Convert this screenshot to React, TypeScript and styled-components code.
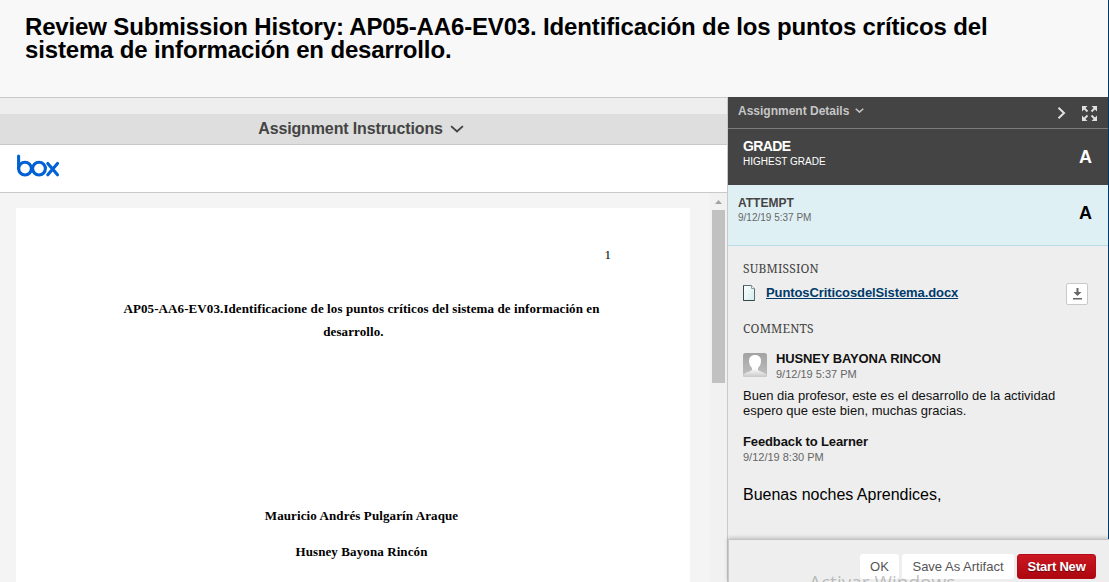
import React from "react";
import styled, { createGlobalStyle } from "styled-components";

const Global = createGlobalStyle`
  * { box-sizing: border-box; }
  html, body { margin: 0; padding: 0; overflow: hidden; }
  body { font-family: "Liberation Sans", Arial, sans-serif; background: #f8f8f8; color: #000; }
  h1, h2, h3, p { margin: 0; }
`;

const Page = styled.div`
  position: relative;
  width: 1109px;
  height: 582px;
  display: flex;
  background: #003a6b;
  flex-direction: column;
  overflow: hidden;
`;
const Top = styled.header`
  height: 97px;
  flex: none;
  margin-right: 1px;
  padding: 15px 25px 0;
  background: #f8f8f8;
`;
const Title = styled.h1`
  font-size: 24px;
  line-height: 23px;
  font-weight: bold;
  letter-spacing: -0.155px;
  white-space: nowrap;
`;
const Main = styled.main`
  display: flex;
  height: 485px;
`;
const Viewer = styled.section`
  width: 728px;
  flex: none;
  border-top: 1px solid #c9c9c9;
  border-right: 1px solid #c9c9c9;
  padding-top: 16px;
  background: #eee;
`;
const Instructions = styled.div`
  height: 31px;
  display: flex;
  align-items: center;
  justify-content: center;
  gap: 7px;
  padding-right: 5px;
  background: #dedede;
  border-bottom: 1px solid #c9c9c9;
  font-size: 16px;
  font-weight: bold;
  letter-spacing: -0.13px;
  color: #444;
`;
const BoxBar = styled.div`
  height: 48px;
  padding: 9px 0 0 16px;
  background: #fff;
  border-bottom: 1px solid #c9c9c9;
  svg { display: block; }
`;
const DocArea = styled.div`
  display: flex;
  height: 389px;
  background: #f4f4f4;
`;
const Paper = styled.article`
  width: 674px;
  margin: 15px 20px 0 16px;
  flex: none;
  background: #fff;
  font-family: "Liberation Serif", "Times New Roman", serif;
  font-weight: bold;
  font-size: 13px;
  letter-spacing: 0.1px;
  text-align: center;
  padding-top: 39px;
`;
const PageNumber = styled.p`
  text-align: right;
  padding-right: 79px;
  font-weight: normal;
  font-size: 13px;
  line-height: 16px;
  margin-bottom: 34px;
`;
const DocLine = styled.p<{ $gap?: number; $indent?: number }>`
  line-height: 23px;
  margin-bottom: ${(p) => p.$gap ?? 0}px;
  padding-left: ${(p) => p.$indent ?? 0}px;
  white-space: nowrap;
`;
const ScrollTrack = styled.div`
  width: 17px;
  padding: 7px 2px 0;
  background: #f1f1f1;
  svg { display: block; margin: 0 0 6px 3px; }
`;
const Thumb = styled.div`
  width: 13px;
  height: 173px;
  background: #c1c1c1;
`;
const Side = styled.aside`
  width: 380px;
  background: #eee;
`;
const Details = styled.div`
  height: 32px;
  display: flex;
  align-items: center;
  padding: 0 10px;
  background: #444;
  border-bottom: 1px solid #7c7c7c;
  color: #c6c6c6;
`;
const DetailsLabel = styled.span`
  flex: 1;
  display: flex;
  align-items: center;
  gap: 6px;
  padding-bottom: 4px;
  font-size: 12px;
  font-weight: bold;
`;
const Tools = styled.span`
  display: flex;
  gap: 15px;
  align-items: center;
  padding-top: 1px;
`;
const ScoreRow = styled.div<{ $dark?: boolean }>`
  height: ${(p) => (p.$dark ? 56 : 61)}px;
  display: flex;
  justify-content: space-between;
  padding: ${(p) => (p.$dark ? "9px 16px 0 15px" : "9px 16px 0 10px")};
  background: ${(p) => (p.$dark ? "#444" : "#dff0f5")};
  color: ${(p) => (p.$dark ? "#fff" : "#444")};
  border-bottom: ${(p) => (p.$dark ? "none" : "1px solid #b8dbe5")};
`;
const ScoreName = styled.h2<{ $tight?: boolean }>`
  font-size: ${(p) => (p.$tight ? 14 : 12)}px;
  letter-spacing: ${(p) => (p.$tight ? "-0.6px" : "0")};
  line-height: ${(p) => (p.$tight ? 17 : 18)}px;
  margin-bottom: ${(p) => (p.$tight ? 1 : 0)}px;
`;
const ScoreNote = styled.p<{ $dim?: boolean }>`
  font-size: 10px;
  line-height: 12px;
  color: ${(p) => (p.$dim ? "#666" : "#fff")};
`;
const Letter = styled.strong<{ $black?: boolean }>`
  font-size: 18px;
  line-height: 20px;
  padding-top: 9px;
  color: ${(p) => (p.$black ? "#000" : "#fff")};
`;
const Content = styled.div`
  padding: 15px 20px 0 15px;
  height: 293px;
`;
const Heading = styled.h3`
  font-family: "Noto Serif", "Liberation Serif", Georgia, serif;
  font-weight: normal;
  font-size: 12px;
  letter-spacing: 0.18px;
  line-height: 16px;
  color: #444;
`;
const FileRow = styled.div`
  display: flex;
  height: 22px;
  margin: 6px 0 16px;
  align-items: center;
  & > svg { margin-top: -2px; }
`;
const FileLink = styled.a`
  flex: 1;
  margin: -3px 0 0 10px;
  color: #003a6b;
  font-size: 13px;
  font-weight: bold;
  letter-spacing: -0.1px;
  text-decoration: underline;
`;
const Download = styled.button`
  width: 22px;
  height: 22px;
  padding: 0;
  display: grid;
  place-items: center;
  background: #fff;
  border: 1px solid #c9c9c9;
  border-radius: 2px;
`;
const Author = styled.div`
  display: flex;
  gap: 9px;
  margin: 14px 0 7px;
  align-items: center;
  height: 30px;
  svg { margin-top: -2px; }
`;
const Name = styled.p`
  font-size: 13px;
  line-height: 16px;
  font-weight: bold;
  letter-spacing: -0.12px;
  color: #111;
`;
const When = styled.p`
  font-size: 11px;
  line-height: 15px;
  color: #666;
`;
const Comment = styled.p`
  font-size: 13px;
  line-height: 15px;
  color: #111;
  margin-bottom: 16px;
  white-space: nowrap;
`;
const Feedback = styled.p`
  margin-top: 20px;
  font-size: 16px;
  line-height: 20px;
`;
const Footer = styled.footer`
  position: relative;
  width: 381px;
  height: 43px;
  display: flex;
  gap: 3px;
  justify-content: flex-end;
  padding: 14px 13px 0 0;
  background: #eee;
  border-top: 1px solid #c4c4c4;
  border-left: 1px solid #c9c9c9;
  box-shadow: 0 -1px 4px rgba(0, 0, 0, 0.22);
`;
const Button = styled.button<{ $primary?: boolean; $width: number }>`
  width: ${(p) => p.$width}px;
  height: 25px;
  padding: 0;
  border: ${(p) => (p.$primary ? "1px solid #b30c18" : "none")};
  border-radius: 3px;
  background: ${(p) => (p.$primary ? "linear-gradient(#cb1822, #ad0710)" : "#fff")};
  color: ${(p) => (p.$primary ? "#fff" : "#555")};
  font: ${(p) => (p.$primary ? "bold" : "normal")} 13px "Liberation Sans", Arial, sans-serif;
  letter-spacing: ${(p) => (p.$primary ? "-0.2px" : "0")};
  text-shadow: ${(p) => (p.$primary ? "0 1px 1px rgba(0,0,0,.45)" : "none")};
  white-space: nowrap;
`;
const Watermark = styled.span`
  position: absolute;
  left: 809px;
  top: 569px;
  font: 19px/26px "Open Sans", sans-serif;
  color: rgba(120, 120, 120, 0.45);
  white-space: nowrap;
  pointer-events: none;
`;

const Chevron = ({ w, sw }: { w: number; sw: number }) => (
  <svg width={w} height={w * 0.6} viewBox="0 0 10 6" fill="none" stroke="currentColor" strokeWidth={sw}>
    <path d="M.8 .8 5 4.6 9.2 .8" />
  </svg>
);

const BoxLogo = () => (
  <svg width="44" height="26" viewBox="0 0 44 26" fill="none" stroke="#0061d5" strokeWidth="3.1" strokeLinecap="round">
    <path d="M2.600 2V14.600" />
    <circle cx="9" cy="14.600" r="6.400" />
    <circle cx="23" cy="14.600" r="6.400" />
    <path d="M31.800 9.400 41.500 20.800M41.500 9.400 31.800 20.800" />
  </svg>
);

const Expand = () => (
  <svg width="17" height="17" viewBox="0 0 17 17" fill="#e0e0e0" stroke="#e0e0e0" strokeWidth="1.8">
    <path stroke="none" d="M1 1h5.500L1 6.500zM16 1v5.500L10.500 1zM1 16v-5.500L6.500 16zM16 16h-5.500L16 10.500z" />
    <path d="M3 3l3.500 3.500M14 3l-3.500 3.500M3 14l3.500-3.500M14 14l-3.500-3.500" />
  </svg>
);

const FileIcon = () => (
  <svg width="13" height="16" viewBox="0 0 13 16">
    <defs>
      <linearGradient id="sheet" x1="0" y1="0" x2="1" y2="1">
        <stop offset="0" stopColor="#fff" />
        <stop offset="1" stopColor="#d3ecee" />
      </linearGradient>
    </defs>
    <path d="M.5 .5H8.500L11.500 3.500V15.500H.5z" fill="url(#sheet)" stroke="#5a6c6d" />
    <path d="M.5 .5V15.500H11.500" fill="none" stroke="#35494b" />
    <path d="M8.500 .5V3.500H11.500" fill="#fff" stroke="#8a9c9d" />
  </svg>
);

const Avatar = () => (
  <svg width="24" height="24" viewBox="0 0 24 24">
    <defs>
      <linearGradient id="back" x1="0" y1="0" x2="0" y2="1">
        <stop offset="0" stopColor="#a2a2a2" />
        <stop offset="1" stopColor="#c0c0c0" />
      </linearGradient>
      <linearGradient id="person" x1="0" y1="0" x2="0" y2="1">
        <stop offset="0.6" stopColor="#fff" />
        <stop offset="1" stopColor="#c8c8c8" />
      </linearGradient>
    </defs>
    <rect width="24" height="24" rx="2.500" fill="url(#back)" />
    <path
      d="M12 2C8 2 6 4.500 6 8c0 3.500 1.500 5.500 3 7v2c-1.500 1.500-6 2-8.500 4.500V24h23v-2.500C21 19 16.500 18.500 15 17v-2c1.500-1.500 3-3.500 3-7 0-3.500-2-6-6-6z"
      fill="url(#person)"
    />
  </svg>
);

export default function App() {
  return (
    <Page>
      <Global />
      <Top>
        <Title>
          Review Submission History: AP05-AA6-EV03. Identificación de los puntos críticos del
          <br />
          sistema de información en desarrollo.
        </Title>
      </Top>
      <Main>
        <Viewer>
          <Instructions>
            Assignment Instructions
            <Chevron w={14} sw={1.4} />
          </Instructions>
          <BoxBar>
            <BoxLogo />
          </BoxBar>
          <DocArea>
            <Paper>
              <PageNumber>1</PageNumber>
              <DocLine $indent={17}>
                AP05-AA6-EV03.Identificacione de los puntos críticos del sistema de información en
              </DocLine>
              <DocLine $gap={161} $indent={1}>
                desarrollo.
              </DocLine>
              <DocLine $gap={13} $indent={17}>
                Mauricio Andrés Pulgarín Araque
              </DocLine>
              <DocLine $indent={17}>Husney Bayona Rincón</DocLine>
            </Paper>
            <ScrollTrack>
              <svg width="7" height="4" viewBox="0 0 7 4" fill="#a3a3a3">
                <path d="M0 4 3.500 0 7 4z" />
              </svg>
              <Thumb />
            </ScrollTrack>
          </DocArea>
        </Viewer>
        <Side>
          <Details>
            <DetailsLabel>
              Assignment Details
              <Chevron w={9} sw={1.7} />
            </DetailsLabel>
            <Tools>
              <svg width="9" height="12" viewBox="0 0 9 12" fill="none" stroke="#e0e0e0" strokeWidth="2">
                <path d="M1.500 .8 7 6 1.500 11.200" />
              </svg>
              <Expand />
            </Tools>
          </Details>
          <ScoreRow $dark>
            <div>
              <ScoreName $tight>GRADE</ScoreName>
              <ScoreNote>HIGHEST GRADE</ScoreNote>
            </div>
            <Letter>A</Letter>
          </ScoreRow>
          <ScoreRow>
            <div>
              <ScoreName>ATTEMPT</ScoreName>
              <ScoreNote $dim>9/12/19 5:37 PM</ScoreNote>
            </div>
            <Letter $black>A</Letter>
          </ScoreRow>
          <Content>
            <Heading>SUBMISSION</Heading>
            <FileRow>
              <FileIcon />
              <FileLink>PuntosCriticosdelSistema.docx</FileLink>
              <Download>
                <svg width="11" height="12" viewBox="0 0 11 12" fill="#666">
                  <path d="M4.500 0h2v4H9.500L5.500 8 1.500 4h3zM1 10h9v1.600H1z" />
                </svg>
              </Download>
            </FileRow>
            <Heading>COMMENTS</Heading>
            <Author>
              <Avatar />
              <div>
                <Name>HUSNEY BAYONA RINCON</Name>
                <When>9/12/19 5:37 PM</When>
              </div>
            </Author>
            <Comment>
              Buen dia profesor, este es el desarrollo de la actividad
              <br />
              espero que este bien, muchas gracias.
            </Comment>
            <Name>Feedback to Learner</Name>
            <When>9/12/19 8:30 PM</When>
            <Feedback>Buenas noches Aprendices,</Feedback>
          </Content>
          <Footer>
            <Button $width={39}>OK</Button>
            <Button $width={112}>Save As Artifact</Button>
            <Button $width={79} $primary>
              Start New
            </Button>
          </Footer>
        </Side>
      </Main>
      <Watermark>Activar Windows</Watermark>
    </Page>
  );
}
